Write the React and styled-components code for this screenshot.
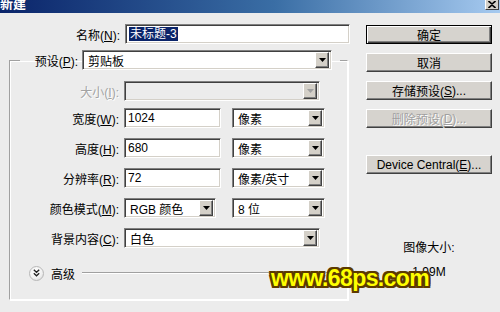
import React from "react";
import styled, { createGlobalStyle, css } from "styled-components";

const Global = createGlobalStyle`
  html, body { margin: 0; padding: 0; }
  body {
    font-family: "Liberation Sans", "Noto Sans CJK SC", sans-serif;
    font-size: 12px;
    color: #000;
    background: #ececec;
  }
`;

const Window = styled.div`
  position: relative;
  width: 500px;
  height: 312px;
  background: #ececec;
  overflow: hidden;
  display: flex;
  flex-direction: column;
`;

const TitleBar = styled.div`
  height: 13px;
  flex: none;
  background: linear-gradient(to right, #0a246a 0%, #3a6ea5 55%, #a6caf0 100%);
  display: flex;
  justify-content: space-between;
  align-items: flex-start;
  overflow: hidden;
`;

const Title = styled.div`
  color: #fff;
  font-family: "Noto Sans CJK SC", sans-serif;
  font-weight: bold;
  font-size: 13px;
  line-height: 13px;
  margin-top: -4px;
  padding-left: 0;
`;

const CloseBtn = styled.div`
  width: 14px;
  height: 10px;
  margin-right: 1px;
  background: #d4d0c8;
  border-left: 1px solid #fff;
  border-bottom: 1px solid #404040;
  border-right: 1px solid #404040;
  display: flex;
  align-items: flex-end;
  justify-content: center;
  box-sizing: border-box;
  padding-bottom: 1px;
`;

const Body = styled.div`
  flex: 1;
  display: flex;
`;

const LeftPane = styled.div`
  width: 355px;
  flex: none;
  padding-top: 11px;
  display: flex;
  flex-direction: column;
`;

const RightPane = styled.div`
  width: 126px;
  margin-left: 11px;
  padding-top: 12px;
  display: flex;
  flex-direction: column;
  align-items: stretch;
`;

const Row = styled.div`
  display: flex;
  align-items: center;
  height: 20px;
  gap: 5px;
  margin-bottom: ${(p) => p.$mb ?? 10}px;
`;

const Label = styled.span`
  width: ${(p) => p.$w}px;
  flex: none;
  text-align: right;
  white-space: nowrap;
  font-family: "Liberation Sans", "Noto Sans CJK SC", sans-serif;
  font-size: 12px;
  color: ${(p) => (p.$disabled ? "#a3a3a3" : "#000")};
  ${(p) => p.$disabled && css`text-shadow: 1px 1px 0 #fff;`}
  u { text-decoration: underline; text-underline-offset: 1px; }
`;

const sunken = css`
  box-sizing: border-box;
  border: 1px solid;
  border-color: #808080 #fff #fff #808080;
  box-shadow: inset 1px 1px 0 #404040, inset -1px -1px 0 #d4d0c8;
`;

const TextBox = styled.div`
  ${sunken};
  width: ${(p) => p.$w}px;
  height: 20px;
  background: #fff;
  padding: 0 3px;
  display: flex;
  align-items: center;
  font-size: 12px;
  white-space: nowrap;
`;

const Selected = styled.span`
  background: #0a246a;
  color: #fff;
  padding: 0 1px;
  line-height: 14px;
`;

const SelectBox = styled.div`
  ${sunken};
  width: ${(p) => p.$w}px;
  height: 20px;
  background: ${(p) => (p.$disabled ? "#ececec" : "#fff")};
  display: flex;
  align-items: center;
  padding: 2px 2px 2px 5px;
  white-space: nowrap;
`;

const SelectText = styled.span`
  flex: 1;
  font-size: 12px;
`;

const ArrowBtn = styled.span`
  width: 14px;
  height: 16px;
  flex: none;
  box-sizing: border-box;
  background: #d4d0c8;
  border: 1px solid;
  border-color: #fff #404040 #404040 #fff;
  box-shadow: inset -1px -1px 0 #808080;
  display: flex;
  align-items: center;
  justify-content: center;
`;

const Arrow = ({ disabled }) => (
  <svg width="7" height="4" viewBox="0 0 7 4">
    <path d="M0 0h7L3.5 4z" fill={disabled ? "#a0a0a0" : "#000"} />
  </svg>
);

const Select = ({ w, disabled, children }) => (
  <SelectBox $w={w} $disabled={disabled}>
    <SelectText>{children}</SelectText>
    <ArrowBtn>
      <Arrow disabled={disabled} />
    </ArrowBtn>
  </SelectBox>
);

const Group = styled.fieldset`
  margin: 6px 0 0 9px;
  padding: 11px 0 18px 0;
  width: 339px;
  box-sizing: border-box;
  min-inline-size: 0;
  border: 2px groove #f8f8f8;
  border-color: #a0a0a0 #fff #fff #a0a0a0;
  border-style: solid;
  border-width: 1px;
  box-shadow: inset 1px 1px 0 #fff, 1px 1px 0 #fff;
`;

const Legend = styled.legend`
  margin-left: 10px;
  padding: 0 8px 0 12px;
  display: flex;
  align-items: center;
  gap: 4px;
  height: 20px;
`;

const AdvRow = styled.div`
  display: flex;
  align-items: center;
  height: 16px;
  margin: 17px 8px 0 19px;
  gap: 7px;
`;

const Circle = styled.span`
  width: 15px;
  height: 15px;
  box-sizing: border-box;
  border-radius: 50%;
  border: 1px solid #b8b8b8;
  background: radial-gradient(circle at 40% 35%, #ffffff 0%, #f2f2f2 55%, #d0d0d0 100%);
  display: flex;
  align-items: center;
  justify-content: center;
  flex: none;
`;

const AdvText = styled.span`
  font-family: "Noto Sans CJK SC", sans-serif;
  font-size: 12px;
`;

const Rule = styled.span`
  flex: 1;
  height: 0;
  border-top: 1px solid #a0a0a0;
  border-bottom: 1px solid #fff;
`;

const Button = styled.div`
  height: 19px;
  box-sizing: border-box;
  background: #d6d3ce;
  border: 1px solid;
  border-color: #fff #404040 #404040 #fff;
  box-shadow: inset -1px -1px 0 #808080;
  display: flex;
  align-items: center;
  justify-content: center;
  font-size: 12px;
  margin-top: ${(p) => p.$mt ?? 9}px;
  white-space: nowrap;
  ${(p) =>
    p.$default &&
    css`
      border: 1px solid #000;
      box-shadow: inset 1px 1px 0 #fff, inset -1px -1px 0 #404040, inset -2px -2px 0 #808080;
    `}
  ${(p) =>
    p.$disabled &&
    css`
      color: #a0a0a0;
      text-shadow: 1px 1px 0 #fff;
    `}
  u { text-decoration: underline; text-underline-offset: 1px; }
`;

const InfoLabel = styled.div`
  text-align: center;
  font-size: 12px;
  line-height: 14px;
  margin-top: ${(p) => p.$mt}px;
`;

const Watermark = styled.div`
  position: absolute;
  left: 271px;
  top: 264px;
  font-family: "Liberation Sans", Arial, sans-serif;
  font-weight: bold;
  font-size: 23px;
  letter-spacing: -0.6px;
  color: #ffff00;
  line-height: 28px;
  text-shadow:
    2px 0 0 #5c3a00, -2px 0 0 #5c3a00, 0 2px 0 #5c3a00, 0 -2px 0 #5c3a00,
    2px 2px 0 #5c3a00, -2px -2px 0 #5c3a00, 2px -2px 0 #5c3a00, -2px 2px 0 #5c3a00,
    1px 1px 1px #6b4a00;
`;

export default function App() {
  return (
    <>
      <Global />
      <Window>
        <TitleBar>
          <Title>新建</Title>
          <CloseBtn>
            <svg width="8" height="7" viewBox="0 0 8 7">
              <path d="M0.5 0L4 3 7.5 0M0.5 7L4 4 7.5 7" stroke="#000" strokeWidth="1.6" fill="none" />
            </svg>
          </CloseBtn>
        </TitleBar>
        <Body>
          <LeftPane>
            <Row $mb={0}>
              <Label $w={120}>
                名称(<u>N</u>):
              </Label>
              <TextBox $w={225}>
                <Selected>未标题-3</Selected>
              </TextBox>
            </Row>
            <Group>
              <Legend>
                <Label $w={46}>
                  预设(<u>P</u>):
                </Label>
                <Select w={250}>剪贴板</Select>
              </Legend>
              <Row $mb={7}>
                <Label $w={109} $disabled>
                  大小(<u>I</u>):
                </Label>
                <Select w={196} disabled />
              </Row>
              <Row>
                <Label $w={109}>
                  宽度(<u>W</u>):
                </Label>
                <TextBox $w={97}>1024</TextBox>
                <Spacer />
                <Select w={93}>像素</Select>
              </Row>
              <Row>
                <Label $w={109}>
                  高度(<u>H</u>):
                </Label>
                <TextBox $w={97}>680</TextBox>
                <Spacer />
                <Select w={93}>像素</Select>
              </Row>
              <Row>
                <Label $w={109}>
                  分辨率(<u>R</u>):
                </Label>
                <TextBox $w={97}>72</TextBox>
                <Spacer />
                <Select w={93}>像素/英寸</Select>
              </Row>
              <Row>
                <Label $w={109}>
                  颜色模式(<u>M</u>):
                </Label>
                <Select w={92}>RGB 颜色</Select>
                <Spacer $w={6} />
                <Select w={93}>8 位</Select>
              </Row>
              <Row $mb={0}>
                <Label $w={109}>
                  背景内容(<u>C</u>):
                </Label>
                <Select w={196}>白色</Select>
              </Row>
              <AdvRow>
                <Circle>
                  <svg width="7" height="8" viewBox="0 0 7 8">
                    <path d="M0.8 0.8L3.5 3.3 6.2 0.8M0.8 4.3L3.5 6.8 6.2 4.3" stroke="#222" strokeWidth="1.3" fill="none" />
                  </svg>
                </Circle>
                <AdvText>高级</AdvText>
                <Rule />
              </AdvRow>
            </Group>
          </LeftPane>
          <RightPane>
            <Button $default $mt={0}>确定</Button>
            <Button>取消</Button>
            <Button>
              存储预设(<u>S</u>)...
            </Button>
            <Button $disabled>
              删除预设(<u>D</u>)...
            </Button>
            <Button $mt={27}>
              Device Central(<u>E</u>)...
            </Button>
            <InfoLabel $mt={67}>图像大小:</InfoLabel>
            <InfoLabel $mt={10}>1.99M</InfoLabel>
          </RightPane>
        </Body>
        <Watermark>www.68ps.com</Watermark>
      </Window>
    </>
  );
}

const Spacer = styled.span`
  width: ${(p) => p.$w ?? 1}px;
  flex: none;
`;
